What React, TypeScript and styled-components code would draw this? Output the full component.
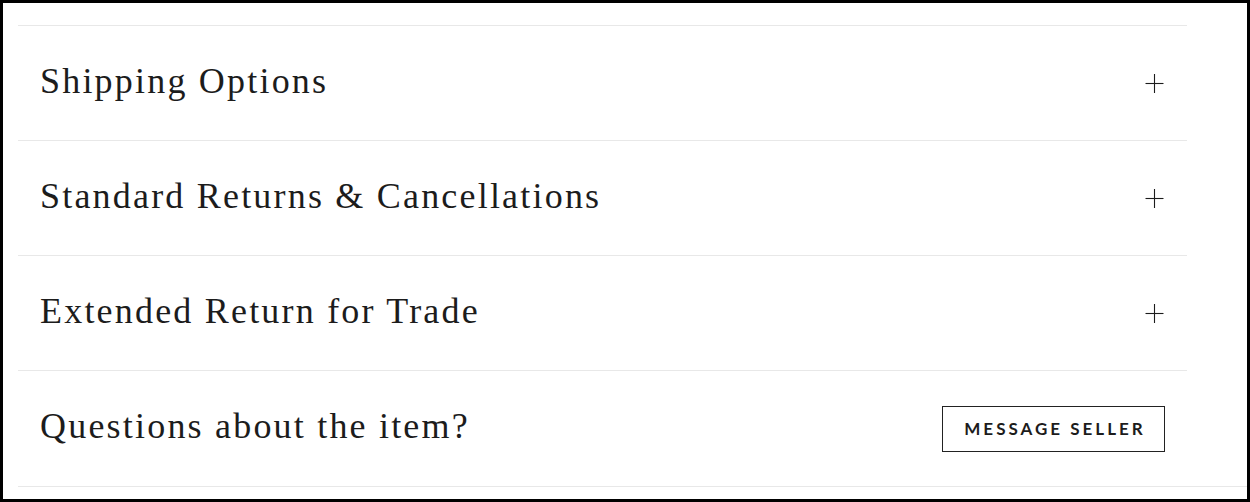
import React from "react";
import styled, { createGlobalStyle } from "styled-components";

const Global = createGlobalStyle`
  html, body { margin: 0; padding: 0; background: #fff; }
  * { box-sizing: border-box; }
`;

const Frame = styled.div`
  width: 1250px;
  height: 502px;
  border: 3px solid #000;
  background: #fff;
  padding: 22px 0 0 15px;
  display: flex;
  flex-direction: column;
  overflow: hidden;
`;

const List = styled.div`
  width: 1169px;
  border-top: 1px solid #e8e8e8;
  display: flex;
  flex-direction: column;
`;

const Row = styled.div<{ $last?: boolean }>`
  height: 115px;
  border-bottom: ${(p) => (p.$last ? "none" : "1px solid #e8e8e8")};
  display: flex;
  align-items: center;
  justify-content: space-between;
  padding: 0 22px 0 22px;
`;

const Title = styled.div`
  font-family: "Liberation Serif", "Times New Roman", serif;
  font-size: 36px;
  letter-spacing: 2.2px;
  color: #1c1c1c;
  padding-bottom: 5px;
  white-space: nowrap;
`;

const PlusButton = styled.button`
  width: 19px;
  height: 19px;
  padding: 0;
  border: none;
  background: none;
  display: flex;
  align-items: center;
  justify-content: center;
  margin-right: 1px;
  cursor: pointer;
`;

const MessageButton = styled.button`
  width: 223px;
  height: 46px;
  border: 1px solid #222;
  background: #fff;
  font-family: Lato, "Liberation Sans", sans-serif;
  font-weight: 700;
  font-size: 17px;
  letter-spacing: 3px;
  color: #1c1c1c;
  text-transform: uppercase;
  display: flex;
  align-items: center;
  justify-content: center;
  padding: 0 0 0 3px;
  margin-right: 0;
  cursor: pointer;
`;

const BottomRule = styled.div`
  height: 1px;
  background: #e8e8e8;
`;

const Plus = () => (
  <svg width="19" height="19" viewBox="0 0 19 19">
    <line x1="9.5" y1="0" x2="9.5" y2="19" stroke="#1c1c1c" strokeWidth="1.1" />
    <line x1="0.5" y1="9.5" x2="18.5" y2="9.5" stroke="#1c1c1c" strokeWidth="1.1" />
  </svg>
);

const items = ["Shipping Options", "Standard Returns & Cancellations", "Extended Return for Trade"];

export default function App() {
  return (
    <>
      <Global />
      <Frame>
        <List>
          {items.map((t) => (
            <Row key={t}>
              <Title>{t}</Title>
              <PlusButton aria-label="expand">
                <Plus />
              </PlusButton>
            </Row>
          ))}
          <Row $last>
            <Title>Questions about the item?</Title>
            <MessageButton>Message Seller</MessageButton>
          </Row>
        </List>
        <BottomRule />
      </Frame>
    </>
  );
}
